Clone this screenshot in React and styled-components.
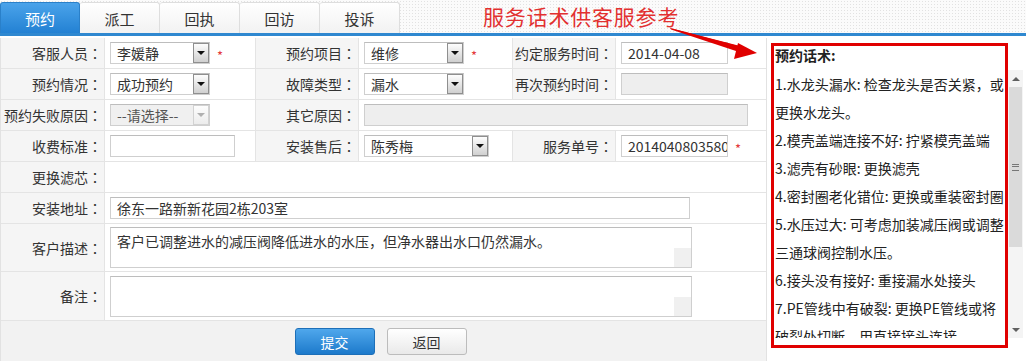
import React from 'react';
import styled, { createGlobalStyle } from 'styled-components';

const GlobalStyle = createGlobalStyle`
  html, body { margin: 0; padding: 0; background: #fff; }
  body {
    font-family: "Noto Sans CJK SC", "Noto Sans", sans-serif;
    font-size: 14px;
    color: #333;
  }
  * { box-sizing: border-box; }
`;

const Page = styled.div`
  position: relative;
  width: 1026px;
  height: 361px;
  overflow: hidden;
  background: #fff;
`;

const TabBar = styled.div`
  height: 36px;
  display: flex;
  align-items: flex-end;
  border-bottom: 3px solid #2f88d0;
  background-color: #fbfbfb;
  background-image: radial-gradient(circle, #e2e2e2 0.7px, transparent 0.9px);
  background-size: 3px 3px;
`;

const Tab = styled.div`
  width: 80px;
  height: 31px;
  display: flex;
  align-items: center;
  justify-content: center;
  font-size: 15px;
  line-height: 1;
  border: 1px solid ${p => (p.$active ? '#2a80c9' : '#dedede')};
  border-bottom: none;
  border-left-width: ${p => (p.$active ? '1px' : '0')};
  border-radius: 3px 3px 0 0;
  background: ${p =>
    p.$active
      ? 'linear-gradient(#4aa3ea, #2381d3)'
      : 'linear-gradient(#ffffff, #f2f2f2)'};
  color: ${p => (p.$active ? '#fff' : '#333')};
`;

const Body = styled.div`
  display: flex;
  margin-top: 2px;
  height: 323px;
`;

const Form = styled.div`
  width: 767px;
  flex: none;
  border-left: 1px solid #e2e2e2;
  border-right: 1px solid #e2e2e2;
  display: flex;
  flex-direction: column;
`;

const Row = styled.div`
  display: flex;
  height: ${p => p.$h || 31}px;
  border-bottom: 1px solid #e4e4e4;
  flex: none;
`;

const Label = styled.div`
  width: ${p => p.$w}px;
  flex: none;
  background: #f5f5f5;
  display: flex;
  align-items: center;
  justify-content: flex-end;
  padding-right: 2px;
  white-space: nowrap;
  color: #333;
  border-right: 1px solid #e4e4e4;
`;

const Colon = styled.span`
  font-family: "Noto Sans CJK TC", "Noto Sans CJK SC", sans-serif;
`;

const Cell = styled.div`
  width: ${p => (p.$w ? p.$w + 'px' : 'auto')};
  flex: ${p => (p.$w ? 'none' : '1')};
  display: flex;
  align-items: center;
  gap: 7px;
  padding-left: 5px;
  background: #fff;
  border-right: ${p => (p.$last ? 'none' : '1px solid #e4e4e4')};
`;

const Input = styled.div`
  width: ${p => p.$w}px;
  height: 22px;
  border: 1px solid #cfcfcf;
  border-top-color: #bdbdbd;
  background: ${p => (p.$disabled ? '#eeeeee' : '#fff')};
  padding: 0 6px;
  line-height: 20px;
  color: #333;
  white-space: nowrap;
  overflow: hidden;
`;

const Select = styled.div`
  width: ${p => p.$w}px;
  height: 22px;
  border: 1px solid #cfcfcf;
  border-top-color: #bdbdbd;
  display: flex;
  align-items: center;
  justify-content: space-between;
  padding-left: 6px;
  background: ${p => (p.$disabled ? '#f0f0f0' : '#fff')};
  color: ${p => (p.$disabled ? '#555' : '#333')};
  line-height: 20px;
  white-space: nowrap;
`;

const DropBtn = styled.span`
  width: 16px;
  height: 20px;
  flex: none;
  border: 1px solid ${p => (p.$disabled ? '#d2d2d2' : '#8f8f8f')};
  background: ${p =>
    p.$disabled ? 'linear-gradient(#fdfdfd, #ececec)' : 'linear-gradient(#fdfdfd, #d0d0d0)'};
  display: flex;
  align-items: center;
  justify-content: center;
  &::after {
    content: '';
    border-left: 4px solid transparent;
    border-right: 4px solid transparent;
    border-top: 4px solid ${p => (p.$disabled ? '#b0b0b0' : '#111')};
    margin-top: -1px;
  }
`;

const Star = styled.span`
  color: #e4393c;
  font-size: 13px;
  align-self: flex-start;
  margin-top: 8px;
`;

const TextArea = styled.div`
  position: relative;
  width: 582px;
  height: 41px;
  border: 1px solid #cfcfcf;
  border-top-color: #bdbdbd;
  padding: 3px 6px;
  line-height: 20px;
  color: #333;
  &::after {
    content: '';
    position: absolute;
    right: 0;
    bottom: 0;
    width: 17px;
    height: 19px;
    background: #f0f0f0;
  }
`;

const ButtonRow = styled.div`
  flex: 1;
  background: #f2f2f2;
  display: flex;
  justify-content: center;
  align-items: flex-start;
  gap: 12px;
  padding-top: 7px;
  padding-right: 6px;
`;

const Button = styled.button`
  width: 80px;
  height: 27px;
  border-radius: 3px;
  font-family: inherit;
  font-size: 14px;
  line-height: 1;
  padding: 0;
  border: 1px solid ${p => (p.$primary ? '#1d6fb8' : '#bcbcbc')};
  background: ${p =>
    p.$primary ? 'linear-gradient(#4fa7ec, #1d7acb)' : 'linear-gradient(#ffffff, #e9e9e9)'};
  color: ${p => (p.$primary ? '#fff' : '#333')};
`;

const Panel = styled.div`
  flex: 1;
  display: flex;
  flex-direction: column;
  padding-top: 3px;
  background: #fff;
`;

const PanelTitle = styled.div`
  font-weight: bold;
  line-height: 28px;
  padding-left: 8px;
  color: #222;
  height: 29px;
`;

const ScrollArea = styled.div`
  display: flex;
  height: 268px;
  padding-right: 3px;
`;

const ScrollContent = styled.div`
  flex: 1;
  overflow: hidden;
  padding-left: 8px;
  line-height: 28px;
  color: #222;
  white-space: nowrap;
`;

const Para = styled.div``;

const ScrollBar = styled.div`
  width: 15px;
  flex: none;
  display: flex;
  flex-direction: column;
  background: #f4f4f4;
`;

const ScrollBtn = styled.div`
  height: 17px;
  flex: none;
  display: flex;
  align-items: center;
  justify-content: center;
  background: #f4f4f4;
  &::after {
    content: '';
    border-left: 4px solid transparent;
    border-right: 4px solid transparent;
    ${p => (p.$down ? 'border-top: 4px solid #606060;' : 'border-bottom: 4px solid #606060;')}
  }
`;

const Thumb = styled.div`
  height: 160px;
  margin: 0 1px;
  background: #dadada;
  display: flex;
  align-items: center;
  justify-content: center;
  &::after {
    content: '';
    width: 7px;
    height: 5px;
    border-top: 1px solid #777;
    border-bottom: 1px solid #777;
    background: linear-gradient(transparent 1px, #777 1px, #777 2px, transparent 2px);
  }
`;

const Track = styled.div`
  flex: 1;
`;

const Note = styled.div`
  position: absolute;
  left: 483px;
  top: 2px;
  font-size: 21px;
  line-height: 28px;
  color: #e23030;
  letter-spacing: 0.8px;
  white-space: nowrap;
`;

const Arrow = styled.svg`
  position: absolute;
  left: 660px;
  top: 20px;
  overflow: visible;
`;

const Highlight = styled.div`
  position: absolute;
  left: 771px;
  top: 43px;
  width: 237px;
  height: 305px;
  border: 3px solid #e00000;
  pointer-events: none;
`;

const tabs = ['预约', '派工', '回执', '回访', '投诉'];

const paragraphs = [
  ['1.水龙头漏水: 检查龙头是否关紧，或', '更换水龙头。'],
  ['2.模壳盖端连接不好: 拧紧模壳盖端'],
  ['3.滤壳有砂眼: 更换滤壳'],
  ['4.密封圈老化错位: 更换或重装密封圈'],
  ['5.水压过大: 可考虑加装减压阀或调整', '三通球阀控制水压。'],
  ['6.接头没有接好: 重接漏水处接头'],
  ['7.PE管线中有破裂: 更换PE管线或将', '破裂处切断，用直接接头连接'],
];

const L = ({ w, children }) => (
  <Label $w={w}>
    {children}
    <Colon>：</Colon>
  </Label>
);

export default function App() {
  return (
    <Page>
      <GlobalStyle />
      <TabBar>
        {tabs.map((t, i) => (
          <Tab key={t} $active={i === 0}>{t}</Tab>
        ))}
      </TabBar>
      <Body>
        <Form>
          <Row>
            <L w={104}>客服人员</L>
            <Cell $w={151}>
              <Select $w={100}>李媛静<DropBtn /></Select>
              <Star>*</Star>
            </Cell>
            <L w={103}>预约项目</L>
            <Cell $w={154}>
              <Select $w={100}>维修<DropBtn /></Select>
              <Star>*</Star>
            </Cell>
            <L w={103}>约定服务时间</L>
            <Cell $last>
              <Input $w={107}>2014-04-08</Input>
            </Cell>
          </Row>
          <Row>
            <L w={104}>预约情况</L>
            <Cell $w={151}>
              <Select $w={100}>成功预约<DropBtn /></Select>
            </Cell>
            <L w={103}>故障类型</L>
            <Cell $w={154}>
              <Select $w={100}>漏水<DropBtn /></Select>
            </Cell>
            <L w={103}>再次预约时间</L>
            <Cell $last>
              <Input $w={107} $disabled />
            </Cell>
          </Row>
          <Row>
            <L w={104}>预约失败原因</L>
            <Cell $w={151}>
              <Select $w={100} $disabled>--请选择--<DropBtn $disabled /></Select>
            </Cell>
            <L w={103}>其它原因</L>
            <Cell $last>
              <Input $w={384} $disabled />
            </Cell>
          </Row>
          <Row>
            <L w={104}>收费标准</L>
            <Cell $w={151}>
              <Input $w={125} />
            </Cell>
            <L w={103}>安装售后</L>
            <Cell $w={154}>
              <Select $w={125}>陈秀梅<DropBtn /></Select>
            </Cell>
            <L w={103}>服务单号</L>
            <Cell $last>
              <Input $w={107}>20140408035800</Input>
              <Star>*</Star>
            </Cell>
          </Row>
          <Row>
            <L w={104}>更换滤芯</L>
            <Cell $last />
          </Row>
          <Row>
            <L w={104}>安装地址</L>
            <Cell $last>
              <Input $w={580}>徐东一路新新花园2栋203室</Input>
            </Cell>
          </Row>
          <Row $h={48}>
            <L w={104}>客户描述</L>
            <Cell $last>
              <TextArea>客户已调整进水的减压阀降低进水的水压，但净水器出水口仍然漏水。</TextArea>
            </Cell>
          </Row>
          <Row $h={49}>
            <L w={104}>备注</L>
            <Cell $last>
              <TextArea />
            </Cell>
          </Row>
          <ButtonRow>
            <Button $primary>提交</Button>
            <Button>返回</Button>
          </ButtonRow>
        </Form>
        <Panel>
          <PanelTitle>预约话术:</PanelTitle>
          <ScrollArea>
            <ScrollContent>
              {paragraphs.map((lines, i) => (
                <Para key={i}>
                  {lines.map((l, j) => (
                    <div key={j}>{l}</div>
                  ))}
                </Para>
              ))}
            </ScrollContent>
            <ScrollBar>
              <ScrollBtn />
              <Thumb />
              <Track />
              <ScrollBtn $down />
            </ScrollBar>
          </ScrollArea>
        </Panel>
      </Body>
      <Note>服务话术供客服参考</Note>
      <Arrow width="100" height="45" viewBox="0 0 100 45">
        <polygon points="10,8 82,27 83,30 12,9" fill="#e00000" />
        <polygon points="78,23 97,33 74,39" fill="#e00000" />
        <polygon points="10,8 80,26 79,32 11,9.5" fill="#e00000" />
      </Arrow>
      <Highlight />
    </Page>
  );
}
